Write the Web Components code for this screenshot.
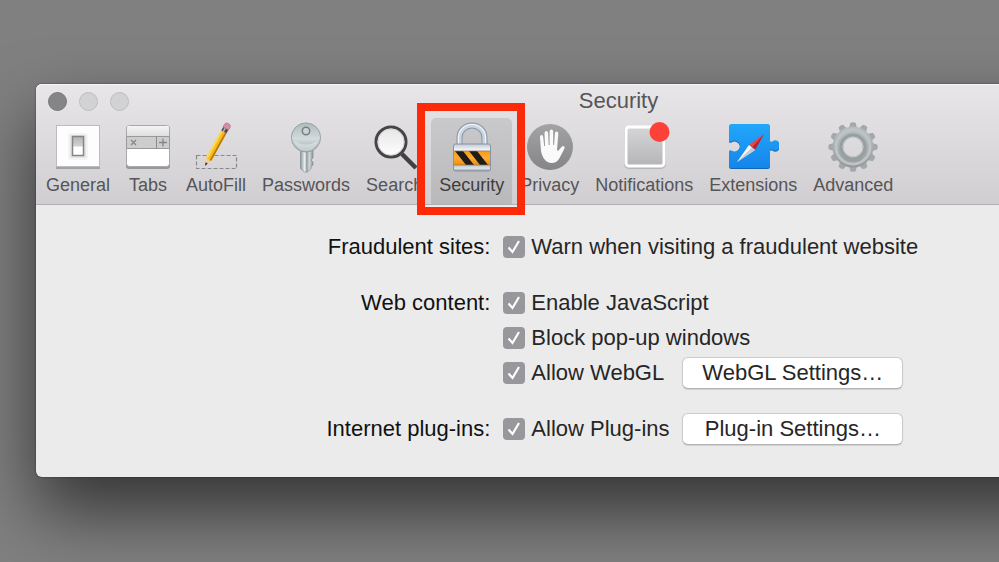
<!DOCTYPE html>
<html lang="en">
<head>
<meta charset="utf-8">
<meta name="viewport" content="width=device-width, initial-scale=1">
<title>Security</title>
<style>
  body {
    margin: 0;
    font-family: "Liberation Sans", Arial, sans-serif;
    color: #262626;
  }
</style>
</head>
<body>
<prefs-desktop>
  <prefs-window heading="Security">
    <toolbar-item slot="toolbar" icon="general">General</toolbar-item>
    <toolbar-item slot="toolbar" icon="tabs">Tabs</toolbar-item>
    <toolbar-item slot="toolbar" icon="autofill">AutoFill</toolbar-item>
    <toolbar-item slot="toolbar" icon="passwords">Passwords</toolbar-item>
    <toolbar-item slot="toolbar" icon="search">Search</toolbar-item>
    <toolbar-item slot="toolbar" icon="security" selected>Security</toolbar-item>
    <toolbar-item slot="toolbar" icon="privacy">Privacy</toolbar-item>
    <toolbar-item slot="toolbar" icon="notifications">Notifications</toolbar-item>
    <toolbar-item slot="toolbar" icon="extensions">Extensions</toolbar-item>
    <toolbar-item slot="toolbar" icon="advanced">Advanced</toolbar-item>

    <prefs-group label="Fraudulent sites:">
      <prefs-row><prefs-check>Warn when visiting a fraudulent website</prefs-check></prefs-row>
    </prefs-group>
    <prefs-group label="Web content:">
      <prefs-row><prefs-check>Enable JavaScript</prefs-check></prefs-row>
      <prefs-row><prefs-check>Block pop-up windows</prefs-check></prefs-row>
      <prefs-row>
        <prefs-check>Allow WebGL</prefs-check>
        <push-button slot="action">WebGL Settings…</push-button>
      </prefs-row>
    </prefs-group>
    <prefs-group label="Internet plug-ins:">
      <prefs-row>
        <prefs-check>Allow Plug-ins</prefs-check>
        <push-button slot="action">Plug-in Settings…</push-button>
      </prefs-row>
    </prefs-group>
  </prefs-window>
</prefs-desktop>

<script>
// twelve gear teeth, one every 30 degrees
const gearTeeth = Array.from({ length: 12 }, (_, i) =>
  `<path d="M21.500 9L23.400 1.800Q26 .8 28.600 1.800L30.500 9z" transform="rotate(${i * 30} 26 26)"/>`
).join("");

// all icons are drawn on a 52 x 52 grid
const icons = {
  general: `
    <defs><linearGradient id="g" x2="0" y2="1"><stop stop-color="#b4b4b4"/><stop offset=".5" stop-color="#d2d2d2"/><stop offset=".55" stop-color="#fff"/></linearGradient></defs>
    <rect x="4" y="5" width="44" height="43" fill="#a3a3a5"/>
    <rect x="4.500" y="4.500" width="43" height="41" fill="#fdfdfd" stroke="#bcbcbe"/>
    <rect x="16" y="12" width="20" height="27" rx="2" fill="#f4f4f4"/>
    <rect x="18" y="14" width="16" height="23" rx="1" fill="#e4e4e4"/>
    <rect x="20.500" y="15.500" width="11" height="19" fill="url(#g)" stroke="#858585" stroke-width="1.500"/>`,
  tabs: `
    <defs><linearGradient id="g" x2="0" y2="1"><stop stop-color="#f5f5f5"/><stop offset="1" stop-color="#dedede"/></linearGradient></defs>
    <rect x="4" y="5" width="44" height="43" rx="3" fill="#98989a"/>
    <rect x="4.500" y="4.500" width="43" height="41" rx="3" fill="#fff" stroke="#a8a8aa"/>
    <path d="M5 15V7q0-2 2-2h38q2 0 2 2v8z" fill="url(#g)"/>
    <path d="M4.500 15.500h43v12h-43z" fill="#cdcdcf" stroke="#999"/>
    <path d="M34.500 15v13" stroke="#8c8c8e"/>
    <path d="M9 19l5 5m0-5l-5 5M41 17.500v8m-4-4h8" stroke="#858587" stroke-width="1.300"/>`,
  autofill: `
    <rect x="6.500" y="34.500" width="40" height="13" fill="none" stroke="#89898b" stroke-width="1.200" stroke-dasharray="4 2"/>
    <g transform="translate(15 45) rotate(29)">
      <path d="M0 0L-3-8H3z" fill="#efcf9b"/>
      <path d="M0 0l-1.300-3.500h2.600z" fill="#333"/>
      <path d="M-3-8V-39H3V-8L1-7 0-8-1-7z" fill="#f7b91c"/>
      <path d="M-3-8V-39h1.800V-7z" fill="#ffdc4a"/>
      <path d="M1.300-7V-39H3V-8z" fill="#b87805"/>
      <path d="M-3-39v-4h6v4z" fill="#4f474c"/>
      <path d="M-1.500-39v-4h1.500v4z" fill="#bdb9bb"/>
      <path d="M-3.200-43v-3q0-2.500 3.200-2.500t3.200 2.500v3z" fill="#d98da4" stroke="#a96d7d" stroke-width=".6"/>
    </g>`,
  passwords: `
    <defs>
      <linearGradient id="g" x2="0" y2="1"><stop stop-color="#b0bbbd"/><stop offset=".55" stop-color="#d3dbdc"/><stop offset="1" stop-color="#9ba7a9"/></linearGradient>
      <linearGradient id="s"><stop stop-color="#8d9698"/><stop offset=".35" stop-color="#f2f4f4"/><stop offset=".5" stop-color="#909a9c"/><stop offset=".7" stop-color="#d4dadb"/><stop offset="1" stop-color="#8b9496"/></linearGradient>
    </defs>
    <path d="M20.500 29h12.500v8l-2 2 2 2v3l-2 1.500v2L27.500 51h-3l-4-3.500z" fill="url(#s)" stroke="#88949a" stroke-width=".8"/>
    <circle cx="26" cy="16.500" r="14.600" fill="url(#g)" stroke="#96a2a4" stroke-width="1"/>
    <path d="M14 20q12 7 24 0-3 10-12 10T14 20z" fill="#eef2f2" opacity=".45"/>
    <circle cx="26" cy="10" r="3.700" fill="#cdd3d4" stroke="#718083" stroke-width="1.500"/>`,
  search: `
    <defs><linearGradient id="g" x2="0" y2="1"><stop stop-color="#e5e5e7"/><stop offset="1" stop-color="#fff"/></linearGradient></defs>
    <path d="M33 33L47 47" stroke="#414141" stroke-width="4.500"/>
    <circle cx="22" cy="21" r="15" fill="url(#g)" stroke="#454545" stroke-width="3"/>
    <circle cx="22" cy="21" r="13" fill="none" stroke="#d6d6d8" stroke-width="1"/>`,
  security: `
    <defs>
      <linearGradient id="g" x2="0" y2="1"><stop stop-color="#c1c9d2"/><stop offset=".2" stop-color="#eef1f5"/><stop offset=".78" stop-color="#bac2cb"/><stop offset=".9" stop-color="#e0e5ea"/><stop offset="1" stop-color="#8e98a5"/></linearGradient>
      <linearGradient id="o" x2="0" y2="1"><stop stop-color="#f79a19"/><stop offset=".5" stop-color="#ffac35"/><stop offset="1" stop-color="#ee8c0c"/></linearGradient>
    </defs>
    <path d="M13.500 25V16.500a12.500 12 0 0 1 25 0V25" fill="none" stroke="#8797aa" stroke-width="6"/>
    <path d="M13.500 25V16.500a12.500 12 0 0 1 25 0V25" fill="none" stroke="#cbd5df" stroke-width="4"/>
    <path d="M12.500 25V16.500a13.500 13 0 0 1 27 0V25" fill="none" stroke="#f0f4f8" stroke-width="1.200"/>
    <rect x="7.500" y="23" width="37" height="27" rx="2" fill="url(#g)" stroke="#8994a2" stroke-width="1"/>
    <path d="M8 30h36v14H8z" fill="url(#o)"/>
    <path d="M9 30h8l11 14h-8zM23 30h8l11 14h-8z" fill="#201c18"/>
    <path d="M8 30h36M8 44h36" stroke="#8a7859" stroke-width=".7"/>`,
  privacy: `
    <defs><linearGradient id="g" x2="0" y2="1"><stop stop-color="#a3a3a5"/><stop offset="1" stop-color="#858587"/></linearGradient></defs>
    <circle cx="26" cy="26" r="23" fill="url(#g)"/>
    <path d="M22 40q-4-4-5-10l-1-14q0-2 1.600-2 1.400 0 1.600 2l1 9h.8l-.5-13q0-2 1.800-2t1.800 2l.6 12h.9V10.500q0-2 1.800-2t1.800 2V24h.9l.8-11.500q.2-2 1.800-1.900 1.700.1 1.600 2.100L33 29l1 1 3.500-4q1.500-1.600 2.700-.6 1 .8 0 2.600L35.500 37q-2.300 5-8 5-3 0-5.500-2z" fill="#fafafa"/>`,
  notifications: `
    <defs><linearGradient id="g" x2="0" y2="1"><stop stop-color="#d5d5d7"/><stop offset="1" stop-color="#b5b5b8"/></linearGradient></defs>
    <rect x="6" y="5" width="42" height="43" rx="5" fill="#b5b5b7"/>
    <rect x="8" y="6" width="38" height="39" rx="3" fill="url(#g)" stroke="#fff" stroke-width="3"/>
    <circle cx="41.500" cy="11" r="10" fill="#fb4138"/>`,
  extensions: `
    <defs>
      <linearGradient id="g" x2="0" y2="1"><stop stop-color="#22a7fb"/><stop offset="1" stop-color="#1585ea"/></linearGradient>
      <path id="p" d="M4.500 4h36q2.500 0 2.500 2.500V21q1 1.500 2.500.3a5 5 0 1 1 0 8.400q-1.500-1.200-2.500.3v15.500q0 2.500-2.500 2.500h-36Q2 48 2 45.500V31q1-1.500 2.500-.4a5.400 5.400 0 1 0 0-9.200Q3 22.500 2 21V6.500Q2 4 4.500 4z"/>
    </defs>
    <use href="#p" fill="#1264b4"/>
    <use href="#p" y="-1" fill="url(#g)"/>
    <path d="M37 13L28 29 22 24z" fill="#e8464a"/>
    <path d="M37 13L25 26.500 28 29z" fill="#b52531"/>
    <path d="M10 41L28 29 22 24z" fill="#f4f6f8"/>
    <path d="M10 41L25 26.500 28 29z" fill="#c3ccd4"/>`,
  advanced: `
    <defs><linearGradient id="g" gradientUnits="userSpaceOnUse" x1="0" y1="2" x2="0" y2="50"><stop stop-color="#b9c2c4"/><stop offset=".5" stop-color="#a9afb0"/><stop offset="1" stop-color="#929496"/></linearGradient></defs>
    <g fill="#a3a8aa">${gearTeeth}</g>
    <circle cx="26" cy="26" r="15" fill="none" stroke="url(#g)" stroke-width="11"/>
    <circle cx="26" cy="26" r="17" fill="none" stroke="#bec3c4" stroke-width="3"/>
    <circle cx="26" cy="26" r="12" fill="none" stroke="#989fa1" stroke-width="3"/>
    <circle cx="26" cy="26" r="10" fill="none" stroke="#c5c9ca" stroke-width="1"/>`,
};

class PrefsDesktop extends HTMLElement {
  constructor() {
    super();
    this.attachShadow({ mode: "open" });
  }

  connectedCallback() {
    this.shadowRoot.innerHTML = `
      <style>
        :host {
          display: flow-root;
          min-height: 100vh;
          overflow: hidden;
          background: #808080;
        }
      </style>
      <slot></slot>
    `;
  }
}

class PrefsWindow extends HTMLElement {
  constructor() {
    super();
    this.attachShadow({ mode: "open" });
  }

  connectedCallback() {
    this.shadowRoot.innerHTML = `
      <style>
        /* the window runs past the right edge of the desktop */
        :host {
          display: block;
          margin: 84px -202px 0 36px;
          background: #ebebeb;
          border-radius: 6px;
          box-shadow: 0 0 2px rgba(0,0,0,.5), 0 34px 70px rgba(0,0,0,.6);
        }
        header {
          border-radius: 6px 6px 0 0;
          border-bottom: 1px solid #b1b0b2;
          background: linear-gradient(#e8e6e9, #d0ced1);
          box-shadow: inset 0 1px #f6f5f7;
          color: #565557;
        }
        .titlebar {
          display: grid;
          grid-template-columns: 1fr auto 1fr;
          align-items: center;
          height: 34px;
          padding: 0 12px;
        }
        .lights { display: flex; gap: 12px; }
        .lights button {
          width: 19px;
          height: 19px;
          padding: 0;
          border: 1px solid #bebdbf;
          border-radius: 50%;
          background: #d2d1d3;
        }
        .lights .close { background: #858487; border-color: #777679; }
        h1 { margin: 0; font-size: 22px; font-weight: 400; line-height: 34px; }
        nav { display: flex; padding: 0 2px; }
        main {
          display: flex;
          flex-direction: column;
          gap: 24px;
          padding: 26px 0 32px;
        }
      </style>
      <header>
        <div class="titlebar">
          <div class="lights">
            <button class="close" aria-label="Close"></button>
            <button aria-label="Minimize"></button>
            <button aria-label="Zoom"></button>
          </div>
          <h1>${this.getAttribute("heading")}</h1>
        </div>
        <nav><slot name="toolbar"></slot></nav>
      </header>
      <main><slot></slot></main>
    `;
  }
}

class ToolbarItem extends HTMLElement {
  constructor() {
    super();
    this.attachShadow({ mode: "open" });
  }

  connectedCallback() {
    const selected = this.hasAttribute("selected");
    this.shadowRoot.innerHTML = `
      <style>
        :host { display: block; position: relative; }
        :host([selected]) { z-index: 1; }
        button {
          display: flex;
          flex-direction: column;
          align-items: center;
          gap: 2px;
          height: 86px;
          padding: 3px 8px 0;
          border: 0;
          border-radius: 5px 5px 0 0;
          background: none;
          color: inherit;
          font: 18px/20px "Liberation Sans", Arial, sans-serif;
        }
        :host([selected]) button {
          background: linear-gradient(#c9c8ca, #b9b8ba);
          color: #3f3e40;
        }
        svg { width: 52px; height: 52px; margin: 0 -4px; }
        .marker {
          position: absolute;
          inset: -15px -13px -11px -14px;
          border: 8px solid #fc2a08;
          pointer-events: none;
        }
      </style>
      <button aria-pressed="${selected}">
        <svg viewBox="0 0 52 52" aria-hidden="true">${icons[this.getAttribute("icon")] || ""}</svg>
        <slot></slot>
      </button>
      ${selected ? '<div class="marker"></div>' : ""}
    `;
  }
}

class PrefsGroup extends HTMLElement {
  constructor() {
    super();
    this.attachShadow({ mode: "open" });
  }

  connectedCallback() {
    this.shadowRoot.innerHTML = `
      <style>
        :host {
          display: grid;
          grid-template-columns: 39% 1fr;
          column-gap: 13px;
          font-size: 22px;
          line-height: 32px;
        }
        .label { text-align: right; color: #111; }
        .rows { display: flex; flex-direction: column; gap: 3px; }
      </style>
      <div class="label" id="label">${this.getAttribute("label")}</div>
      <div class="rows" role="group" aria-labelledby="label"><slot></slot></div>
    `;
  }
}

class PrefsRow extends HTMLElement {
  constructor() {
    super();
    this.attachShadow({ mode: "open" });
  }

  connectedCallback() {
    this.shadowRoot.innerHTML = `
      <style>
        :host { display: flex; align-items: center; gap: 12px; height: 32px; }
        ::slotted(prefs-check) { min-width: 167px; }
      </style>
      <slot></slot>
      <slot name="action"></slot>
    `;
  }
}

class PrefsCheck extends HTMLElement {
  constructor() {
    super();
    this.attachShadow({ mode: "open" });
  }

  connectedCallback() {
    this.shadowRoot.innerHTML = `
      <style>
        :host { display: block; white-space: nowrap; }
        label { display: flex; align-items: center; gap: 6px; }
        .box { display: grid; width: 22px; height: 22px; }
        input, svg { grid-area: 1 / 1; width: 22px; height: 22px; margin: 0; }
        input { appearance: none; border-radius: 4px; background: #98979b; }
        svg { pointer-events: none; visibility: hidden; }
        input:checked + svg { visibility: visible; }
      </style>
      <label>
        <span class="box">
          <input type="checkbox" checked>
          <svg viewBox="0 0 22 22" aria-hidden="true"><path d="M5.500 11.500l4 4.500 6.500-11" fill="none" stroke="#fff" stroke-width="2.200"/></svg>
        </span>
        <slot></slot>
      </label>
    `;
  }
}

class PushButton extends HTMLElement {
  constructor() {
    super();
    this.attachShadow({ mode: "open" });
  }

  connectedCallback() {
    this.shadowRoot.innerHTML = `
      <style>
        :host { display: block; }
        button {
          display: block;
          min-width: 221px;
          height: 32px;
          padding: 0 16px;
          border: 1px solid #cbcbcb;
          border-bottom-color: #b2b2b2;
          border-radius: 6px;
          background: #fff;
          box-shadow: 0 1px 1px rgba(0,0,0,.12);
          color: inherit;
          font: inherit;
          line-height: 30px;
        }
      </style>
      <button><slot></slot></button>
    `;
  }
}

customElements.define("prefs-desktop", PrefsDesktop);
customElements.define("prefs-window", PrefsWindow);
customElements.define("toolbar-item", ToolbarItem);
customElements.define("prefs-group", PrefsGroup);
customElements.define("prefs-row", PrefsRow);
customElements.define("prefs-check", PrefsCheck);
customElements.define("push-button", PushButton);
</script>
</body>
</html>
